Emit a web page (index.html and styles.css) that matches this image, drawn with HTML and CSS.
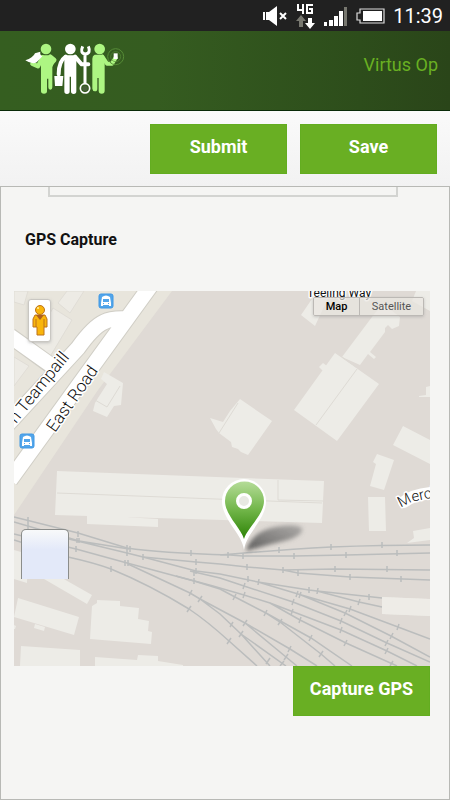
FILE: index.html
```html
<!DOCTYPE html>
<html lang="en">
<head>
<meta charset="utf-8">
<meta name="viewport" content="width=device-width, initial-scale=1">
<title>GPS Capture</title>
<link rel="stylesheet" href="styles.css">
</head>
<body>
<div class="status">
  <svg width="26" height="20" viewBox="0 0 26 20" fill="#fff"><path d="M1 6h2v8H1zM4 6h3l8-6v20l-8-6H4z"/><path d="M18 7l6 6M24 7l-6 6" stroke="#fff" stroke-width="2"/></svg>
  <svg width="20" height="26" viewBox="0 0 20 26"><path d="M2 1v6h6M7 1v10M17 2h-6v8h5V6h-3" fill="none" stroke="#fff" stroke-width="2"/><path d="M5 12l5 6H7v6H3v-6H0z" fill="#77776f"/><path d="M14 26l5-6h-3v-5h-4v5H9z" fill="#fff"/></svg>
  <svg width="24" height="20" viewBox="0 0 24 20" fill="#fff"><path d="M0 16h3v4H0zM5 14h4v6H5zM10 10h4v10h-4zM15 5h4v15h-4z"/><path d="M20 1h3v19h-3z" fill="#77776f"/></svg>
  <svg width="29" height="18" viewBox="0 0 29 18"><path d="M4 2h24v14H4v-3H1V6h3z" fill="none" stroke="#ddd" stroke-width="1.200"/><path d="M7 4h19v10H7z" fill="#fff"/></svg>
  <span class="clock">11:39</span>
</div>
<header class="header">
  <svg class="logo" width="103" height="57" viewBox="75 30 309 171">
    <g fill="#adf682" stroke="#adf682" stroke-linecap="round" stroke-linejoin="round">
      <circle cx="141" cy="57" r="16" stroke="none"/>
      <path d="M126 76h26l16 14-8 22v60q0 7-6 7t-6-7v-26h-4v38q0 7-9 7t-9-7v-80z" stroke="none"/>
      <path d="M131 82l-14 27-17-8M154 80l12 10-12 14" fill="none" stroke-width="13"/>
      <circle cx="302" cy="57" r="16" stroke="none"/>
      <path d="M287 74h24q8 4 6 18v90q0 9-9 9t-9-9v-38h-4v32q0 8-7 8t-8-8V86q0-9 7-12z" stroke="none"/>
      <path d="M310 80l14 21h15l11-18" fill="none" stroke-width="12"/>
    </g>
    <path d="M79 91q23-7 29-21l16-5q-2 10 6 14l-17 18q-13 8-34-6z" fill="#fff"/>
    <g fill="#fff">
      <circle cx="214" cy="57" r="16"/>
      <path d="M196 76h36v108q0 8-8 8t-8-8v-44h-4v44q0 8-8 8t-8-8z"/>
      <path d="M200 80q-21 14-21 53M228 80l20 23h20" fill="none" stroke="#fff" stroke-width="12" stroke-linecap="round" stroke-linejoin="round"/>
      <path d="M166 138h27l-3 30h-22z"/>
      <path d="M251 49q-9 21 8 23 18-3 9-23M258 70v90" fill="none" stroke="#fff" stroke-width="9"/>
    </g>
    <circle cx="258" cy="175" r="14" fill="none" stroke="#fff" stroke-width="5"/>
    <circle cx="258" cy="175" r="8" fill="#48603c"/>
    <circle cx="350" cy="80" r="24" fill="none" stroke="#568b37" stroke-width="3"/>
    <circle cx="350" cy="80" r="15" fill="none" stroke="#568b37" stroke-width="2"/>
    <path d="M344 70h12v17h-12z" fill="#fff"/>
  </svg>
  <a class="user" href="#">Virtus Op</a>
</header>
<div class="toolbar">
  <button class="btn" type="button">Submit</button>
  <button class="btn" type="button">Save</button>
</div>
<main class="panel">
  <input class="field" type="text" aria-label="Answer">
  <h2 class="title">GPS Capture</h2>
  <div class="map">
    <svg class="canvas" viewBox="14 291 416 375">
      <defs>
        <linearGradient id="pin" x1="0" y1="0" x2="0" y2="1"><stop offset="0" stop-color="#b5dc98"/><stop offset=".5" stop-color="#70b548"/><stop offset="1" stop-color="#2c8205"/></linearGradient>
        <linearGradient id="shade" x1="0" y1="1" x2="1" y2="0"><stop offset="0" stop-color="#444" stop-opacity=".85"/><stop offset="1" stop-color="#777" stop-opacity=".5"/></linearGradient>
        <filter id="soft" x="-20%" y="-30%" width="140%" height="160%"><feGaussianBlur stdDeviation="2"/></filter>
        <path id="lane" d="M401 508Q408 503 416 501L450 494"/>
      </defs>
      <path d="M14 291h416v375H14z" fill="#dfdad5"/>
      <path d="M14 291h158L125 354 98 390 14 515z" fill="#e8e5dc"/>
      <g fill="#edebe5" stroke="#e0ddd6" stroke-width="1">
        <path d="M58 303l9-12h17l-14 22zM53 308l19 12-24 40-18-12zM14 357l15 9-15 20zM14 291h14l-4 14-10-3z"/>
      </g>
      <path d="M101 379l3-7 19 11-2 22-7 1-7 11-14-6 2-8 3-5 9-14z" fill="#edece7"/>
      <path d="M120 386l-13 21-12-7" fill="none" stroke="#dedbd5"/>
      <g fill="none" stroke="#d0cec6" stroke-width="17">
        <path d="M10 336l43 31M8 424l70-76q15-21 26-26 8-4 22-3M152 284L10 480"/>
      </g>
      <g fill="none" stroke="#fff" stroke-width="15">
        <path d="M10 336l45 32M8 424l70-76q15-21 26-26 8-4 24-3M152 284L10 480"/>
        <path d="M404 502Q412 495 431 493" stroke-width="12" stroke-linecap="round"/>
      </g>
      <g fill="#edece7">
        <path d="M335 353l44 31-42 57-43-31zM319 367l4-4 4 3-4 5zM342 357l33-44 8-9 17 13-1 9-7 3-4-4-3 3 0 4-15 20 6 5-2 2-6-5-8 11zM301 315l13-19h15l-14 30zM210 418l13 4 7-11 10-12 32 22-24 34-7-3-3-3-6-2-1-5-12-9-3-4zM403 426l27 14v24l-37-19zM419 396l7-1 0-8 4-1v11h-11zM377 454l17 6-10 30-14-4 6-22-3-2zM368 497h17l1 34h-17zM407 543l7-5-1-7 17-3v12zM412 301l4-10h14v20z"/>
        <path d="M57 471l267 10-2 42-267-8zM87 515l71 4v8l-71-3zM382 597l48 2v17l-48-2z"/>
        <path d="M44 579l18-1 30 17-5 9zM14 550l14 4-1 29-13-4zM18 598l61 19-5 18-60-18zM35 624l10 3-1 4-10-3zM21 646l59 4v16H20zM92 606l5-3v-3l23 1v5l19 2-1 11 11 2-1 10 4 1-1 12-61-5zM95 657l42 3 1-5 20 1v5l25 4v1H95zM14 625l2 1-1 3h-1z"/>
      </g>
      <path d="M57 493l265 10M278 480v20l45 1M357 369l-41 56M342 357l14 10M219 433l19-30" fill="none" stroke="#dedbd5"/>
      <g fill="none" stroke="#bbbdbd" stroke-width="1.500">
        <path d="M14 517L78 533 127 548Q159 553 230 555L243 556 294 556 346 555 430 553M220 555Q279 550 331 547 382 545 430 545"/>
        <path d="M14 522L69 538 79 541 129 549M69 539L127 553 143 557 196 562 220 564 247 567 283 570 335 569 430 570M283 570L298 573 350 577 430 580"/>
        <path d="M143 557L196 571 220 574 258 582 309 590 317 591 382 598M317 591L359 602 382 607M258 582L298 594 350 609 398 627 430 639M301 595L345 613 391 636 430 657"/>
        <path d="M14 534L76 549 127 563 194 581 220 589 235 597 266 613 280 622 321 654 335 666M266 613L311 638 352 666M190 571L220 578 244 586 293 602 341 621 387 643 430 662"/>
        <path d="M128 564L190 593 200 599 245 623 290 649 317 666M200 599L220 614 241 634 270 666M245 623L286 657 297 666M241 634L286 666M176 576L213 586 244 595 270 603 341 630 387 651 417 666M270 603L300 620 346 643 397 666"/>
        <path d="M14 540L68 557 Q95 563 111 569 150 585 189 609 207 621 229 641L257 666"/>
        <path d="M28 517v6M28 523v6M78 531v6M77 538v5M79 538v5M76 546v6M127 545v6M130 546v6M127 551v5M143 554v6M125 560v6M128 560v6M191 550v6M196 559v6M196 568v6M194 570v6M194 578v6M192 590l-3 6M202 596l-4 6M111 566v6M191 606l-4 6M228 552v6M243 553v6M279 547v6M294 553v6M331 544v6M346 552v6M382 542v6M397 550v6M247 564v6M283 567v6M298 570v6M335 566v6M350 574v6M387 566v6M401 576v6M248 576v6M259 579l-1 6M309 587v6M318 588l-1 6M369 594v6M360 599l-2 6M298 591l-2 6M301 592l-2 6M351 606l-2 6M399 624l-2 6M347 610l-3 6M393 633l-3 6M245 583l-2 6M294 599l-2 6M342 618l-2 6M388 640l-3 6M245 592l-2 6M293 609l-2 6M342 627l-2 6M388 648l-3 6M301 617l-2 6M347 640l-3 6M393 661l-3 5M236 594l-3 6M267 610l-3 6M282 619l-4 6M323 651l-4 6M312 635l-3 6M247 620l-4 6M291 646l-3 6M288 654l-4 6M243 631l-4 6M270 658l-4 6M284 661l-4 5M233 622l-3 5M231 638l-4 6"/>
      </g>
      <path d="M382 597l48 2v17l-48-2z" fill="#edece7" opacity=".75"/>
      <g class="street">
        <text transform="translate(55 433) rotate(-55)">East Road</text>
        <text transform="translate(16 424) rotate(-51)">n Teampaill</text>
        <text class="medium"><textPath href="#lane">Merch</textPath></text>
        <text class="small" x="307" y="297">Teeling Way</text>
      </g>
      <g id="bus">
        <rect x="99" y="294" width="14" height="14" rx="2" fill="#52a5ea" stroke="#3e98e5"/>
        <path d="M102 297q4-3 8 0l1 6v3h-2v-1h-6v1h-2v-3z" fill="#fff"/><path d="M103 299h6v3h-6zM103 303h1v1h-1zM108 303h1v1h-1z" fill="#52a5ea"/>
      </g>
      <use href="#bus" x="-79" y="140"/>
      <path d="M246 551q5-19 29-24 20-4 27 1 2 7-14 12-21 5-42 11z" fill="url(#shade)" filter="url(#soft)"/>
      <path d="M244 550C242 533 222 520 222 501a22 22 0 0 1 44 0C266 520 246 533 244 550z" fill="#fff"/>
      <path d="M244 539C241 528 225 515 225 501a19.500 19.500 0 0 1 39 0C264 515 247 528 244 539z" fill="url(#pin)"/>
      <circle cx="244" cy="501" r="6.500" fill="#e8e9e3" stroke="#fff" stroke-width="3"/>
    </svg>
    <button class="pegman" type="button" aria-label="Street View">
      <svg width="18" height="34" viewBox="0 0 18 34" fill="#f9b50b" stroke="#bd731a"><path d="M4 11h10l2 4v8h-3v8H6v-8H2v-8z"/><path d="M5 15v8M13 15v8" fill="none"/><path d="M5 11h8l-4 5z" fill="#ad601f" stroke="none"/><circle cx="9" cy="6" r="4.500"/><circle cx="7" cy="4" r="1" fill="#fff2a0" stroke="none"/></svg>
    </button>
    <div class="types"><button class="type on" type="button">Map</button><button class="type" type="button">Satellite</button></div>
    <div class="zoombox"></div>
  </div>
  <button class="btn capture" type="button">Capture GPS</button>
</main>
</body>
</html>
```
FILE: styles.css
```css
* { box-sizing: border-box; }
body {
  margin: 0;
  min-height: 100vh;
  display: flex;
  flex-direction: column;
  background: #f5f5f3;
  font-family: Roboto, "Liberation Sans", sans-serif;
  color: #111;
}
button { font-family: inherit; cursor: pointer; }
.status {
  height: 31px;
  padding-right: 7px;
  display: flex;
  align-items: center;
  justify-content: flex-end;
  gap: 8px;
  background: #212121;
}
.clock { color: #fff; font-size: 20px; line-height: 24px; }
.header {
  height: 80px;
  padding: 9px 12px 0 24px;
  display: flex;
  justify-content: space-between;
  align-items: flex-start;
  background: linear-gradient(90deg, #355e20, #355c20 35%, #2d4d1b 80%, #2a4519);
  border-bottom: 1px solid #092a08;
}
.user {
  margin-top: 14px;
  font-size: 18px;
  line-height: 22px;
  color: #69b022;
  text-decoration: none;
}
.toolbar {
  height: 75px;
  padding: 13px 13px 0;
  display: flex;
  justify-content: flex-end;
  gap: 13px;
  background: linear-gradient(#fafafa, #f2f2f2);
}
.btn {
  width: 137px;
  height: 50px;
  padding: 0 0 4px;
  border: 1px solid #63ad20;
  background: #69af23;
  color: #fff;
  font-size: 18px;
  font-weight: 700;
  line-height: 22px;
}
.panel {
  flex: 1;
  display: flex;
  flex-direction: column;
  padding: 0 19px 0 13px;
  border: 1px solid #b8b9b5;
}
.field {
  height: 10px;
  margin: 0 32px 0 34px;
  padding: 0;
  border: 2px solid #d3d4d1;
  border-top: 0;
  background: transparent;
}
.title {
  margin: 32px 0 41px 11px;
  font-size: 16px;
  font-weight: 700;
  line-height: 21px;
}
.map { position: relative; overflow: hidden; }
.canvas { display: block; width: 100%; height: auto; }
.street text {
  font-size: 17px;
  font-weight: 300;
  fill: #111;
  stroke: #fff;
  stroke-width: 3px;
  paint-order: stroke;
  stroke-linejoin: round;
}
.street .medium { font-size: 15px; }
.street .small { font-size: 12px; font-weight: 400; }
.pegman {
  position: absolute;
  left: 14px;
  top: 8px;
  width: 23px;
  height: 43px;
  padding: 0;
  display: flex;
  align-items: center;
  justify-content: center;
  border: 1px solid #c9c7c2;
  border-radius: 3px;
  background: #fff;
  box-shadow: 0 1px 3px #9998;
}
.types {
  position: absolute;
  right: 6px;
  top: 6px;
  display: flex;
  border: 1px solid #bcb9b5;
  border-radius: 2px;
  box-shadow: 0 1px 3px #8886;
}
.type {
  height: 17px;
  width: 63px;
  padding: 0;
  border: 0;
  background: #e9e6e1b0;
  color: #555;
  font-size: 11px;
  line-height: 16px;
}
.type.on {
  width: 46px;
  border-right: 1px solid #bcb9b5;
  color: #000;
  font-weight: 500;
}
.zoombox {
  position: absolute;
  left: 7px;
  top: 238px;
  width: 48px;
  height: 50px;
  border: 1px solid #8b8d8b;
  border-bottom: 0;
  border-radius: 5px 5px 0 0;
  background: linear-gradient(#f8f9fa, #e3e9f9 40%);
}
.capture { align-self: flex-end; }
```
